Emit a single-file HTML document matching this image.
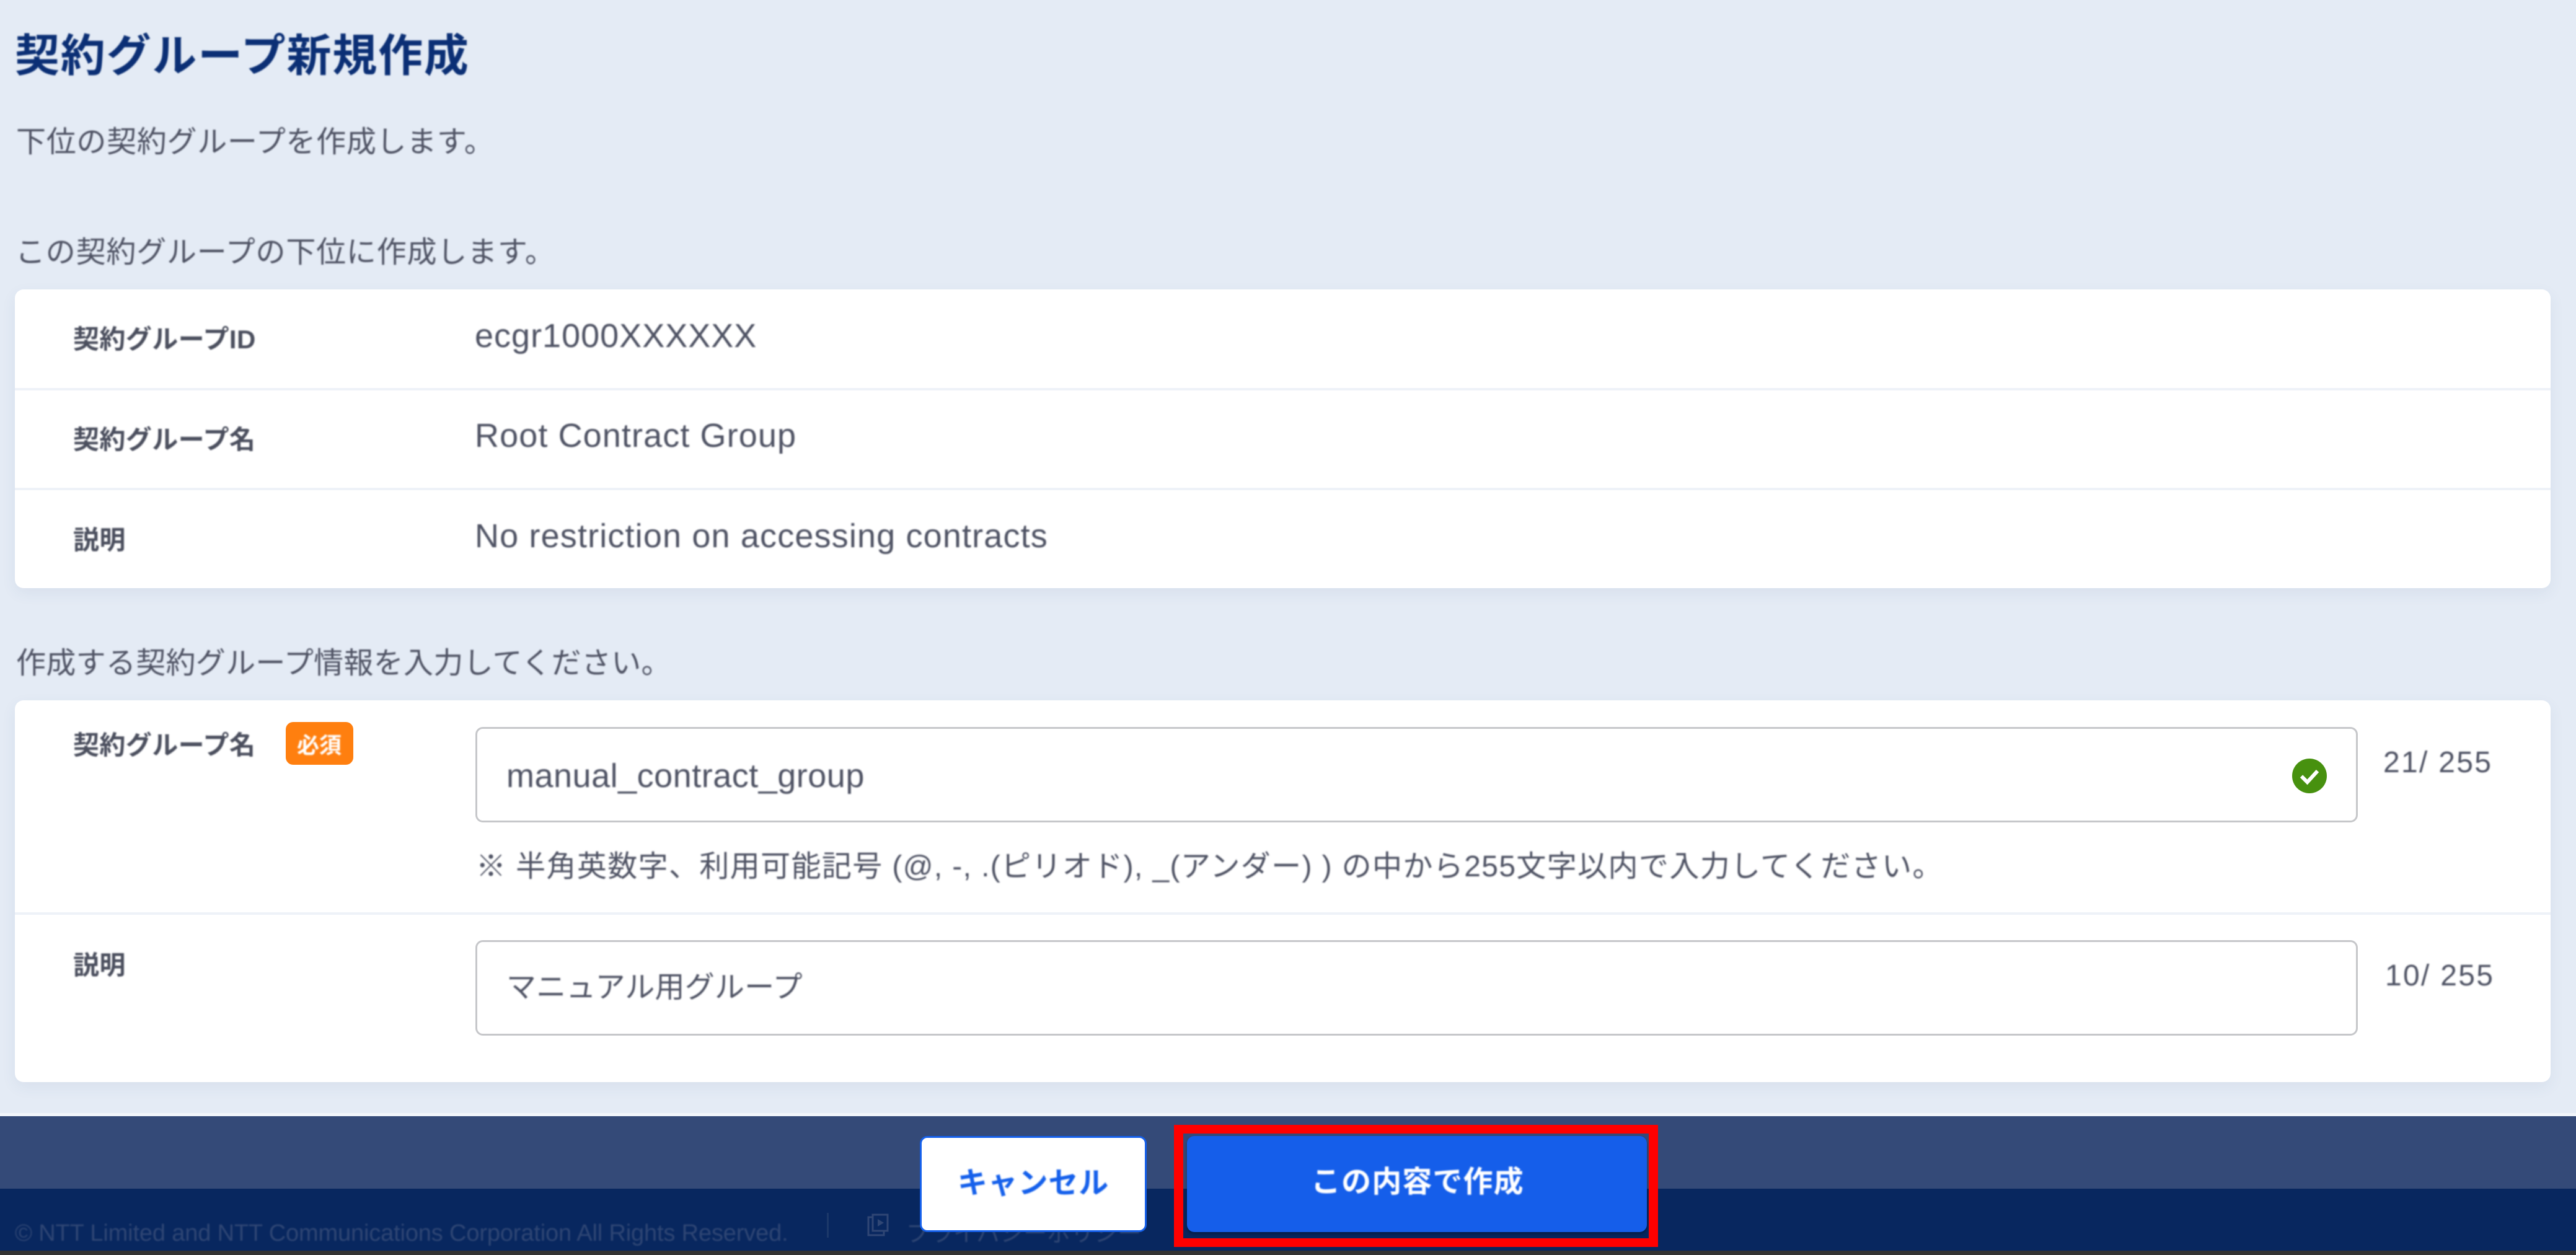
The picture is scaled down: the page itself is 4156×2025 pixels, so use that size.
<!DOCTYPE html>
<html lang="ja">
<head>
<meta charset="utf-8">
<title>契約グループ新規作成</title>
<style>
html,body{margin:0;padding:0;}
body{width:4156px;height:2025px;overflow:hidden;position:relative;background:#e4ebf5;font-family:"Liberation Sans","Noto Sans CJK JP",sans-serif;color:#4b4f60;}
.t{position:absolute;white-space:nowrap;line-height:1;filter:blur(1.1px);}
.b{font-weight:700;}
.box{position:absolute;box-sizing:border-box;}
.card{background:#fff;border-radius:14px;box-shadow:0 8px 24px rgba(60,80,130,.07);}
.div{position:absolute;left:24px;width:4091px;height:4px;background:#eef2f8;}
.input{background:#fff;border:3px solid #c6c7ca;border-radius:12px;}
.lab{font-size:42px;font-weight:700;letter-spacing:.4px;color:#4b4f5e;}
.val{font-size:54px;letter-spacing:1px;color:#4f5364;}
.jp{font-size:48px;letter-spacing:.4px;color:#4f5364;}
</style>
</head>
<body>
<div class="t b" style="left:24px;top:55px;font-size:72px;letter-spacing:1.8px;color:#0b2f75;">契約グループ新規作成</div>
<div class="t jp" style="left:26px;top:206px;letter-spacing:.7px;">下位の契約グループを作成します。</div>
<div class="t jp" style="left:25px;top:384px;letter-spacing:.8px;">この契約グループの下位に作成します。</div>

<div class="box card" style="left:24px;top:467px;width:4091px;height:482px;"></div>
<div class="div" style="top:626px;"></div>
<div class="div" style="top:787px;"></div>
<div class="t lab" style="left:118px;top:527px;">契約グループID</div>
<div class="t lab" style="left:118px;top:689px;">契約グループ名</div>
<div class="t lab" style="left:118px;top:851px;">説明</div>
<div class="t val" style="left:766px;top:515px;">ecgr1000XXXXXX</div>
<div class="t val" style="left:766px;top:676px;letter-spacing:1.1px;">Root Contract Group</div>
<div class="t val" style="left:766px;top:838px;letter-spacing:1.15px;">No restriction on accessing contracts</div>

<div class="t jp" style="left:26px;top:1047px;letter-spacing:.3px;">作成する契約グループ情報を入力してください。</div>

<div class="box card" style="left:24px;top:1130px;width:4091px;height:616px;"></div>
<div class="div" style="top:1472px;"></div>
<div class="t lab" style="left:118px;top:1182px;">契約グループ名</div>
<div class="box" style="left:461px;top:1165px;width:109px;height:69px;background:#ff7f0f;border-radius:12px;"></div>
<div class="t b" style="left:479px;top:1185px;font-size:36px;color:#fff;">必須</div>
<div class="box input" style="left:767px;top:1173px;width:3037px;height:154px;"></div>
<div class="t val" style="left:817px;top:1225px;letter-spacing:.5px;">manual_contract_group</div>
<svg style="position:absolute;left:3698px;top:1224px;" width="56" height="56" viewBox="0 0 56 56"><circle cx="28" cy="28" r="28" fill="#47910f"/><path d="M15 28.5 L24.5 38 L41 20" fill="none" stroke="#fff" stroke-width="6"/></svg>
<div class="t" style="left:3845px;top:1207px;font-size:48px;letter-spacing:2.3px;color:#4f5364;">21/ 255</div>
<div class="t jp" style="left:768px;top:1375px;letter-spacing:1.38px;">※ 半角英数字、利用可能記号 (@, -, .(ピリオド), _(アンダー) ) の中から255文字以内で入力してください。</div>
<div class="t lab" style="left:118px;top:1537px;">説明</div>
<div class="box input" style="left:767px;top:1517px;width:3037px;height:154px;"></div>
<div class="t jp" style="left:817px;top:1570px;letter-spacing:.2px;">マニュアル用グループ</div>
<div class="t" style="left:3848px;top:1551px;font-size:48px;letter-spacing:2.3px;color:#4f5364;">10/ 255</div>

<div class="box" style="left:0;top:1796px;width:4156px;height:5px;background:#f1f5fa;"></div>
<div class="box" style="left:0;top:1801px;width:4156px;height:117px;background:#344a78;"></div>
<div class="box" style="left:0;top:1918px;width:4156px;height:100px;background:#08275f;"></div>
<div class="box" style="left:0;top:2018px;width:4156px;height:7px;background:#333;"></div>

<div class="t" style="left:24px;top:1971px;font-size:38px;letter-spacing:-.15px;color:#2f4674;">© NTT Limited and NTT Communications Corporation All Rights Reserved.</div>
<div class="box" style="left:1334px;top:1957px;width:3px;height:40px;background:#1c3869;"></div>
<svg style="position:absolute;left:1397px;top:1958px;" width="40" height="38" viewBox="0 0 40 38" fill="none" stroke="#2f4674" stroke-width="3"><rect x="11" y="2" width="24" height="26" /><path d="M11 6H4V35H29V28"/><path d="M19 9L29 15L19 21Z" fill="#2f4674" stroke="none"/></svg>
<div class="t" style="left:1462px;top:1972px;font-size:38px;color:#2f4674;">プライバシーポリシー</div>

<div class="box" style="left:1484px;top:1833px;width:366px;height:155px;background:#fff;border:3px solid #1560eb;border-radius:12px;"></div>
<div class="t b" style="left:1545px;top:1886px;font-size:48px;letter-spacing:.8px;color:#1560eb;">キャンセル</div>
<div class="box" style="left:1915px;top:1833px;width:742px;height:155px;background:#155eea;border-radius:12px;box-shadow:0 3px 5px rgba(0,0,0,.3);"></div>
<div class="t b" style="left:2115px;top:1884px;font-size:48px;letter-spacing:1.1px;color:#fff;">この内容で作成</div>
<div class="box" style="left:1894px;top:1815px;width:781px;height:197px;border:solid #ff0000;border-width:14px 15px;"></div>
</body>
</html>
